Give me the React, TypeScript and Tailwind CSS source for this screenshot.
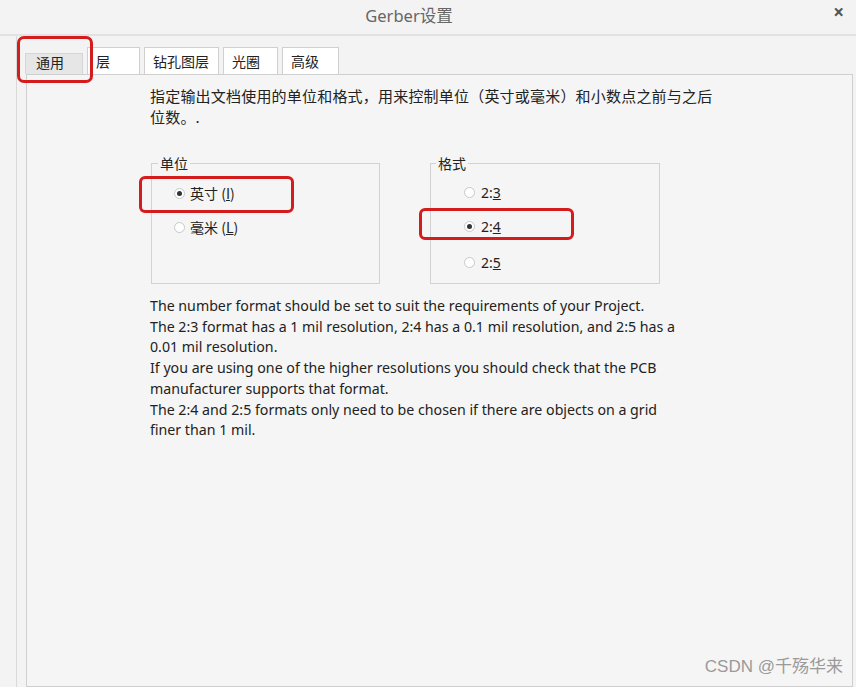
import React from "react";

const cjk = { fontFamily: '"Noto Sans CJK SC", "Noto Sans", sans-serif' };
const en = { fontFamily: '"Noto Sans", "Noto Sans CJK SC", sans-serif' };

function Radio({ checked }: { checked?: boolean }) {
  return (
    <span className="inline-flex w-[11px] h-[11px] rounded-full border border-[#c8c8c8] bg-white items-center justify-center shrink-0">
      {checked && <span className="w-[5px] h-[5px] rounded-full bg-[#333]" />}
    </span>
  );
}

function Tab({ label, w, selected }: { label: string; w: number; selected?: boolean }) {
  return (
    <div
      style={{ width: w }}
      className={
        selected
          ? "h-[21px] mr-[4px] bg-[#e6e6e6] border border-[#d6d6d6] border-b-0 flex items-start pl-[10px] text-[14px] leading-[17px] text-[#222]"
          : "h-[27px] mr-[4px] bg-white border border-[#d0d0d0] border-b-0 flex items-center pl-[8px] text-[14px] text-[#222]"
      }
    >
      {label}
    </div>
  );
}

export default function App() {
  return (
    <div className="relative w-[856px] h-[687px] overflow-hidden bg-[#f3f3f3] text-[#222]" style={cjk}>
      {/* title bar */}
      <div className="relative h-[36px] flex items-center justify-center border-b-2 border-[#e2e2e2] pr-[38px]">
        <span className="text-[16.5px] text-[#666] mt-[-2px]" style={en}>
          Gerber<span style={cjk}>设置</span>
        </span>
        <span className="absolute right-[12px] top-[-2px] text-[19px] text-[#555] font-bold" style={en}>
          ×
        </span>
      </div>

      {/* body */}
      <div className="ml-[16px] border-l border-[#d9d9d9] h-[651px] flex flex-col pt-[9px] pr-[3px]">
        <div className="flex items-end pl-[8px] h-[27px] mt-[2px]">
          <Tab label="通用" w={58} selected />
          <Tab label="层" w={53} />
          <Tab label="钻孔图层" w={75} />
          <Tab label="光圈" w={55} />
          <Tab label="高级" w={57} />
        </div>
        <div className="ml-[9px] flex-1 border border-[#cfcfcf] bg-[#f5f5f5] pl-[123px] pt-[10px]">
          <div className="text-[15px] tracking-[0.2px] leading-[21px] text-[#222] w-[600px]">
            指定输出文档使用的单位和格式，用来控制单位（英寸或毫米）和小数点之前与之后
            <br />
            位数。.
          </div>

          <div className="flex mt-[37px] ml-[1px] gap-[50px]">
            <fieldset className="w-[229px] h-[130px] border border-[#d2d2d2] -mt-[10px]">
              <legend className="ml-[6px] px-[2px] text-[14px] leading-[18px]">单位</legend>
              <div className="pl-[22px]">
                <div className="flex items-center gap-[5px] h-[20px] mt-[11px] text-[14px]">
                  <Radio checked />
                  <span>
                    英寸 (<span className="underline">I</span>)
                  </span>
                </div>
                <div className="flex items-center gap-[5px] h-[20px] mt-[14px] text-[14px]">
                  <Radio />
                  <span>
                    毫米 (<span className="underline">L</span>)
                  </span>
                </div>
              </div>
            </fieldset>
            <fieldset className="w-[230px] h-[130px] border border-[#d2d2d2] -mt-[10px]" style={en}>
              <legend className="ml-[5px] px-[2px] text-[14px] leading-[18px]" style={cjk}>
                格式
              </legend>
              <div className="pl-[33px]">
                <div className="flex items-center gap-[6px] h-[20px] mt-[10px] text-[14px]">
                  <Radio />
                  <span>
                    2:<span className="underline">3</span>
                  </span>
                </div>
                <div className="flex items-center gap-[6px] h-[20px] mt-[14px] text-[14px]">
                  <Radio checked />
                  <span>
                    2:<span className="underline">4</span>
                  </span>
                </div>
                <div className="flex items-center gap-[6px] h-[20px] mt-[16px] text-[14px]">
                  <Radio />
                  <span>
                    2:<span className="underline">5</span>
                  </span>
                </div>
              </div>
            </fieldset>
          </div>

          <div className="mt-[12px] text-[14.2px] leading-[20.7px] text-[#222] w-[600px]" style={en}>
            The number format should be set to suit the requirements of your Project.
            <br />
            The 2:3 format has a 1 mil resolution, 2:4 has a 0.1 mil resolution, and 2:5 has a
            <br />
            0.01 mil resolution.
            <br />
            If you are using one of the higher resolutions you should check that the PCB
            <br />
            manufacturer supports that format.
            <br />
            The 2:4 and 2:5 formats only need to be chosen if there are objects on a grid
            <br />
            finer than 1 mil.
          </div>
        </div>
      </div>

      {/* annotation overlays */}
      <div className="absolute left-[17px] top-[36px] w-[76px] h-[47px] border-[3px] border-[#d41c1c] rounded-[7px]" />
      <div className="absolute left-[139px] top-[176px] w-[155px] h-[37px] border-[3px] border-[#d41c1c] rounded-[6px]" />
      <div className="absolute left-[419px] top-[208px] w-[155px] h-[32px] border-[3px] border-[#d41c1c] rounded-[6px]" />

      <div className="absolute right-[13px] bottom-[8px] text-[17px] text-[#9a9a9a]" style={{ fontFamily: '"Liberation Sans", "Noto Sans CJK SC", sans-serif' }}>
        CSDN @千殇华来
      </div>
    </div>
  );
}
